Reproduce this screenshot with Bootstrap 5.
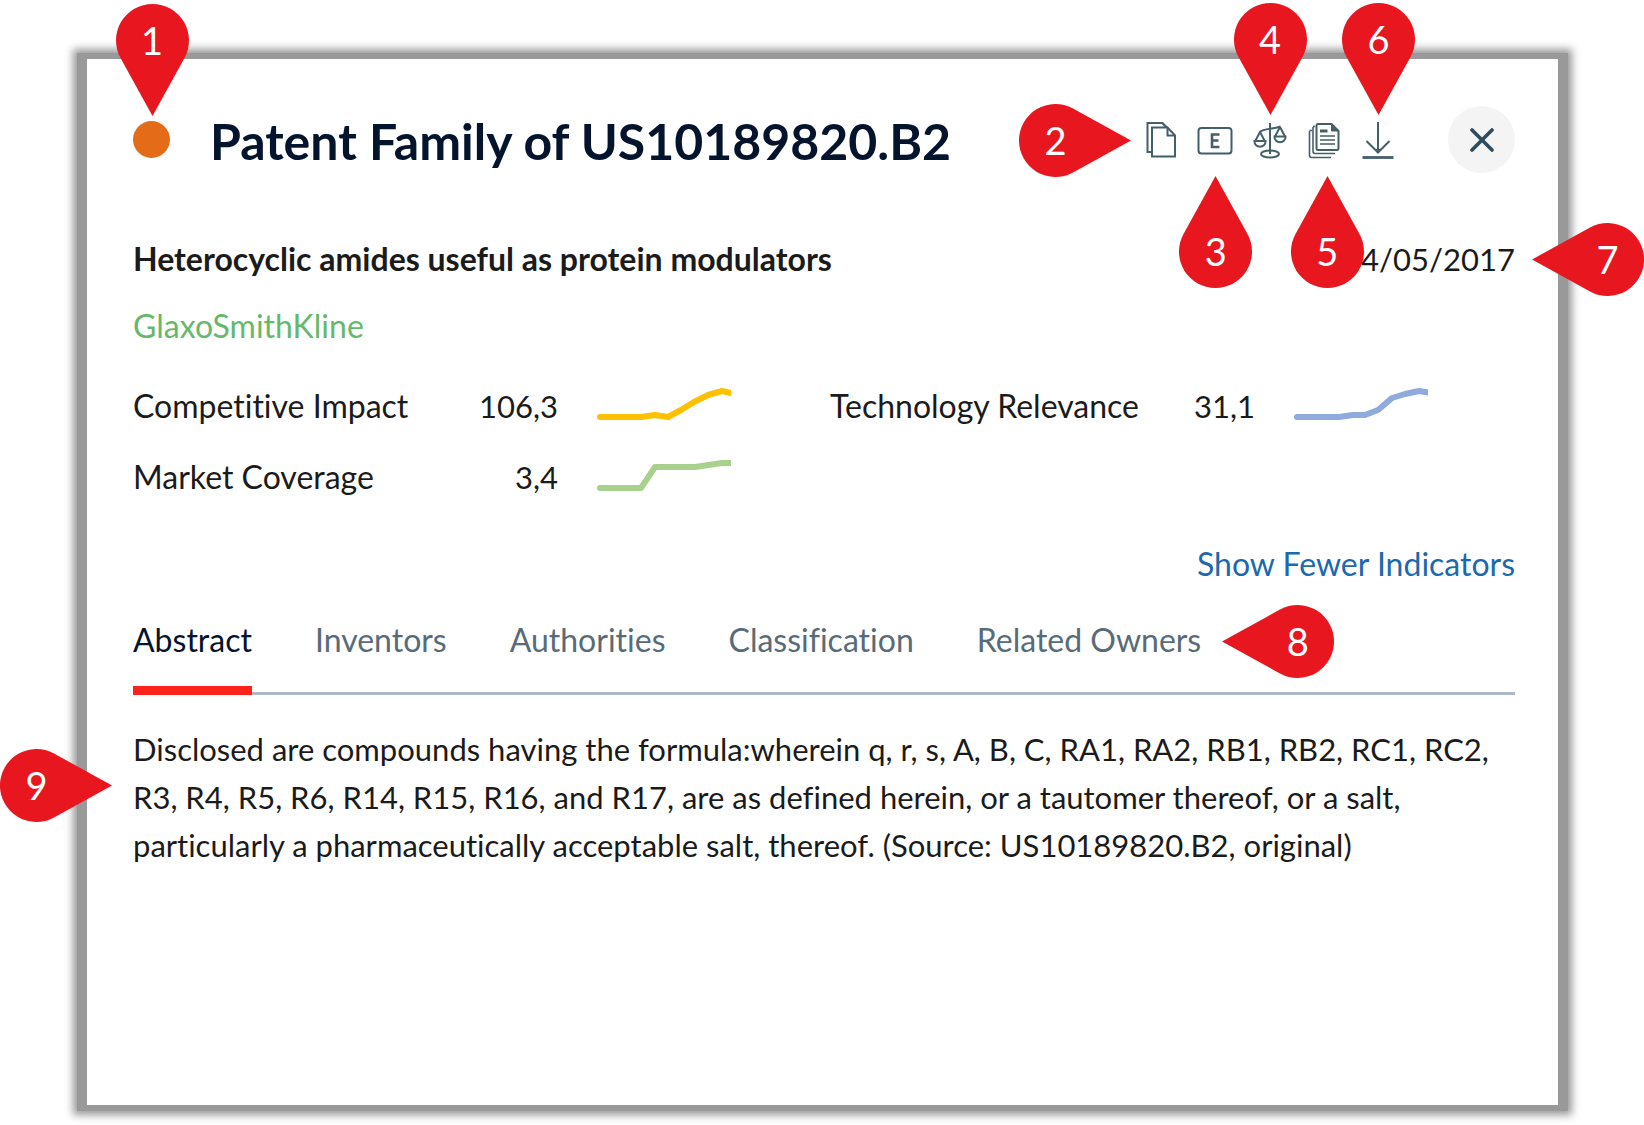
<!DOCTYPE html>
<html lang="en">
<head>
<meta charset="utf-8">
<meta name="viewport" content="width=device-width, initial-scale=1">
<title>Patent Family of US10189820.B2</title>
<link href="https://cdn.jsdelivr.net/npm/bootstrap@5.3.0/dist/css/bootstrap.min.css" rel="stylesheet">
<style>
  :root { --ink: #1b1b1b; --navy: #04142d; --steel: #455f69; --pin: #e8171f; --frame: #999; }
  body { font-family: Lato, "Open Sans", sans-serif; font-size: 32px; line-height: 48px; font-variant-ligatures: none; color: var(--ink); background: #fff; padding: 53px 76px 14px 77px; overflow-x: hidden; }
  .dialog-panel { border: solid var(--frame); border-width: 6px 10px; box-shadow: 0 0 8px 4px var(--frame); padding: 47px 43px 47px 46px; background: #fff; }
  .dialog-title { font-size: 50px; line-height: 67px; padding-top: 4px; font-weight: 700; color: var(--navy); }
  .status-dot { width: 37px; height: 37px; background: #e46c18; }
  .title-group { gap: 40px; height: 67px; }
  .tool-group { width: 253px; margin-right: 52px; }
  .tool-btn { width: 36px; height: 39px; padding: 0; border: 0; background: none; color: var(--steel); }
  .tool-btn svg { display: block; width: 36px; height: 39px; fill: none; stroke: currentColor; stroke-width: 2; }
  .close-btn { width: 67px; height: 67px; padding: 0; border: 0; background: #f4f4f4; color: #2f4a5a; }
  .owner-link { color: #66b96a; }
  .subject-row { margin-top: 62px; }
  .subject-date, .indicator-value, .abstract-text { font-size: 31px; }
  .owner-row { margin-top: 19px; }
  .indicator-row { --bs-gutter-x: 12px; --bs-gutter-y: 23px; margin-top: 9px; }
  .indicator-name { width: 305px; }
  .indicator-value { width: 120px; }
  .spark { width: 134px; height: 48px; margin-left: 39px; fill: none; stroke-width: 6; stroke-linecap: round; stroke-linejoin: round; }
  .fewer-row { margin-top: 39px; }
  .fewer-btn { border: 0; padding: 0; background: none; color: #1c69ae; }
  .tab-strip { margin-top: 28px; gap: 63px; box-shadow: inset 0 -3px 0 #adb9c8; }
  .tab-btn { border: 0; border-bottom: 9px solid transparent; padding: 0 0 22px; background: none; color: #586b78; font-variant-ligatures: inherit; }
  .tab-btn.active { color: var(--navy); border-bottom-color: #fb231a; }
  .abstract-text { margin-top: 30px; }

  /* numbered callouts, each hung on the thing it points at */
  .pin { position: absolute; z-index: 5; display: flex; align-items: center; justify-content: center; width: 73px; height: 73px; font-size: 38px; line-height: 73px; font-weight: 400; color: #fff; pointer-events: none; }
  .pin svg { position: absolute; top: 0; left: 0; width: 73px; height: 73px; overflow: visible; fill: var(--pin); stroke: none; z-index: -1; }
  .pin-down { bottom: calc(100% + 44px); left: calc(50% - 36px); }
  .pin-up { top: calc(100% + 56px); left: calc(50% - 36px); }
  .pin-up svg { transform: rotate(180deg); }
  .pin-docs { left: calc(50% - 33px); }
  .pin-right { right: calc(100% + 51px); top: calc(50% - 36px); }
  .pin-right svg, .pin-para svg { transform: rotate(-90deg); }
  .pin-left { left: calc(100% + 56px); top: calc(50% - 36px); }
  .pin-left svg { transform: rotate(90deg); }
  .pin-para { right: calc(100% + 60px); top: 24px; }
  .tab-btn .pin-left { left: calc(100% + 60px); top: -11px; }
</style>
<script src="https://cdn.jsdelivr.net/npm/bootstrap@5.3.0/dist/js/bootstrap.bundle.min.js"></script>
</head>
<body class="d-flex flex-column min-vh-100">

<svg width="0" height="0" class="position-absolute" aria-hidden="true">
  <symbol id="pin-shape" viewBox="0 0 73 73" overflow="visible">
    <path d="M36.500 112 L4.500 54 A36.500 36.500 0 1 1 68.500 54 Z"/>
  </symbol>
</svg>

<main class="dialog-panel flex-grow-1" role="dialog" aria-labelledby="familyTitle">
  <header class="d-flex align-items-center">
    <div class="title-group d-flex align-items-center me-auto">
      <span class="status-dot rounded-circle position-relative flex-shrink-0">
        <span class="pin pin-down"><svg><use href="#pin-shape"/></svg>1</span>
      </span>
      <h1 class="dialog-title m-0" id="familyTitle">Patent Family of US10189820.B2</h1>
    </div>

    <div class="tool-group d-flex justify-content-between position-relative flex-shrink-0">
      <span class="pin pin-right"><svg><use href="#pin-shape"/></svg>2</span>
      <button type="button" class="tool-btn position-relative" aria-label="Copy">
        <svg viewBox="0 0 36 39"><path d="M8.500 32H4.500V3H19.500L22 6M19.500 3L24 7.500"/><path d="M9 7.500H24.500L32 15.500V36.500H9Z"/><path d="M24.500 7.500V15.500H32"/></svg>
      </button>
      <button type="button" class="tool-btn position-relative" aria-label="Espacenet">
        <svg viewBox="0 0 36 39"><rect x="1.500" y="8" width="33" height="25.500" rx="3"/><path d="M22.500 14.500H15V27H22.500M15 20.500H21.500" stroke-width="2.600"/></svg>
        <span class="pin pin-up"><svg><use href="#pin-shape"/></svg>3</span>
      </button>
      <button type="button" class="tool-btn position-relative" aria-label="Compare">
        <svg viewBox="0 0 36 39"><path d="M18 3V34M7.500 12C12 8 20 9.500 28.500 6.500" /><path d="M8 12L3 21.500M8 12L13 21.500M28 7L23 16.500M28 7L33 16.500"/><path d="M2.500 21H13.500C14 28.500 2 28.500 2.500 21ZM22.500 16.500H33.500C34 24 22 24 22.500 16.500Z"/><ellipse cx="18" cy="34" rx="9" ry="3.500"/></svg>
        <span class="pin pin-down"><svg><use href="#pin-shape"/></svg>4</span>
      </button>
      <button type="button" class="tool-btn position-relative" aria-label="Documents">
        <svg viewBox="0 0 36 39"><path d="M10.500 5.500Q10.500 4 12 4H25.500L32.500 11V28Q32.500 30 31 30H12Q10.500 30 10.500 28Z"/><path d="M25.500 4V11H32.500Z" fill="currentColor" stroke-width="1"/><path d="M14 11H21.500" stroke-width="3"/><path d="M14 16H29M14 20H29M14 24H29" stroke-width="1.600"/><path d="M7 7V31Q7 33.500 9 33.500H29M3.500 11V35Q3.500 37.500 5.500 37.500H25" stroke-width="1.600"/><path d="M9 6.500H7M6 10.500H3.500" stroke-width="1.600"/></svg>
        <span class="pin pin-up pin-docs"><svg><use href="#pin-shape"/></svg>5</span>
      </button>
      <button type="button" class="tool-btn position-relative" aria-label="Download">
        <svg viewBox="0 0 36 39"><path d="M18 2V32M6.500 21L18 32.500L29.500 21"/><path d="M14.500 29L18 33L21.500 29Z" fill="currentColor" stroke="none"/><path d="M2.500 37.500H33.500" stroke-width="2.800"/></svg>
        <span class="pin pin-down"><svg><use href="#pin-shape"/></svg>6</span>
      </button>
    </div>

    <button type="button" class="close-btn rounded-circle flex-shrink-0 d-flex align-items-center justify-content-center" aria-label="Close">
      <svg width="24" height="24" viewBox="0 0 24 24" fill="none" stroke="currentColor" stroke-width="3.600" stroke-linecap="round"><path d="M2 2L22 22M22 2L2 22"/></svg>
    </button>
  </header>

  <div class="subject-row d-flex justify-content-between">
    <strong>Heterocyclic amides useful as protein modulators</strong>
    <span class="subject-date position-relative">04/05/2017
      <span class="pin pin-left"><svg><use href="#pin-shape"/></svg>7</span>
    </span>
  </div>

  <div class="owner-row"><a href="#" class="owner-link text-decoration-none">GlaxoSmithKline</a></div>

  <div class="row indicator-row">
    <div class="col-6 d-flex">
      <span class="indicator-name text-nowrap">Competitive Impact</span>
      <span class="indicator-value text-end">106,3</span>
      <svg class="spark" viewBox="0 0 134 48" stroke="#ffc000" aria-hidden="true"><polyline points="3,35 44,35 58,33 71,35 84,28 97,20 111,13 125,9 138,12"/></svg>
    </div>
    <div class="col-6 d-flex">
      <span class="indicator-name text-nowrap">Technology Relevance</span>
      <span class="indicator-value text-end">31,1</span>
      <svg class="spark" viewBox="0 0 134 48" stroke="#8faadc" aria-hidden="true"><polyline points="3,35 45,35 59,33 71,33 84,28 98,16 111,12 125,9 138,11"/></svg>
    </div>
    <div class="col-6 d-flex">
      <span class="indicator-name text-nowrap">Market Coverage</span>
      <span class="indicator-value text-end">3,4</span>
      <svg class="spark" viewBox="0 0 134 48" stroke="#a9d18e" aria-hidden="true"><polyline points="3,35 44,35 58,14 98,14 125,10 138,10"/></svg>
    </div>
  </div>

  <div class="fewer-row d-flex justify-content-end">
    <button type="button" class="fewer-btn">Show Fewer Indicators</button>
  </div>

  <div class="tab-strip d-flex" role="tablist">
    <button type="button" class="tab-btn active" role="tab" aria-selected="true">Abstract</button>
    <button type="button" class="tab-btn" role="tab" aria-selected="false">Inventors</button>
    <button type="button" class="tab-btn" role="tab" aria-selected="false">Authorities</button>
    <button type="button" class="tab-btn" role="tab" aria-selected="false">Classification</button>
    <button type="button" class="tab-btn position-relative" role="tab" aria-selected="false">Related Owners
      <span class="pin pin-left"><svg><use href="#pin-shape"/></svg>8</span>
    </button>
  </div>

  <div class="abstract-text position-relative" role="tabpanel">
    <span class="pin pin-para"><svg><use href="#pin-shape"/></svg>9</span>
    <p class="m-0">Disclosed are compounds having the formula:wherein q, r, s, A, B, C, RA1, RA2, RB1, RB2, RC1, RC2, R3, R4, R5, R6, R14, R15, R16, and R17, are as defined herein, or a tautomer thereof, or a salt, particularly a pharmaceutically acceptable salt, thereof. (Source: US10189820.B2, original)</p>
  </div>
</main>
</body>
</html>
